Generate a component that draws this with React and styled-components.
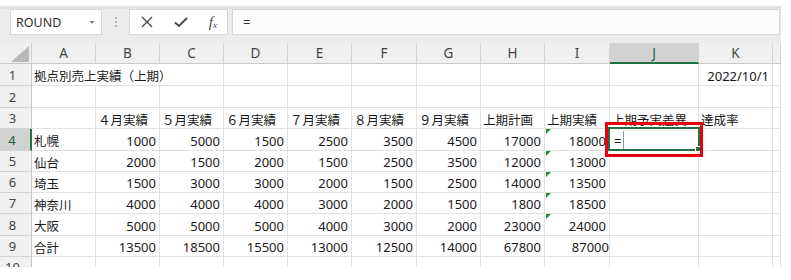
import styled, { createGlobalStyle } from "styled-components";

const GlobalStyle = createGlobalStyle`
  body {
    margin: 0;
    background: #fff;
    font-family: "Noto Sans", "Noto Sans CJK JP", sans-serif;
  }
`;

const colWidths = [32, 64, 64, 64, 64, 64, 65, 64, 64, 65, 89, 74, 8];
const rowHeights = [21, 22, 22, 21, 22, 21, 21, 21, 22, 21, 21];
const letters = ["A", "B", "C", "D", "E", "F", "G", "H", "I", "J", "K", ""];

const months = ["４月実績", "５月実績", "６月実績", "７月実績", "８月実績", "９月実績"];

const data = [
  ["札幌", 1000, 5000, 1500, 2500, 3500, 4500, 17000, 18000],
  ["仙台", 2000, 1500, 2000, 1500, 2500, 3500, 12000, 13000],
  ["埼玉", 1500, 3000, 3000, 2000, 1500, 2500, 14000, 13500],
  ["神奈川", 4000, 4000, 4000, 3000, 2000, 1500, 1800, 18500],
  ["大阪", 5000, 5000, 5000, 4000, 3000, 2000, 23000, 24000],
  ["合計", 13500, 18500, 15500, 13000, 12500, 14000, 67800, 87000],
];

const App = () => {
  return (
    <>
      <GlobalStyle />
      <Window>
        <Toolbar>
          <NameBox>
            <span>ROUND</span>
            <svg width="8" height="5" viewBox="0 0 8 5">
              <path d="M1.5 1 L4 3.8 L6.5 1 Z" fill="#777" />
            </svg>
          </NameBox>
          <Grip>
            <i />
            <i />
            <i />
          </Grip>
          <FxButtons>
            <svg width="14" height="14" viewBox="0 0 14 14">
              <path d="M2 2 L12 12 M12 2 L2 12" stroke="#4a4a4a" strokeWidth="1.4" fill="none" />
            </svg>
            <svg width="16" height="14" viewBox="0 0 16 14">
              <path d="M2 7.5 L6 11 L14 3" stroke="#4a4a4a" strokeWidth="2" fill="none" />
            </svg>
            <FxLabel>
              f<sub>x</sub>
            </FxLabel>
          </FxButtons>
          <FormulaInput>=</FormulaInput>
        </Toolbar>

        <Sheet>
          <Corner>
            <svg width="18" height="16" viewBox="0 0 18 16">
              <path d="M18 0 L18 16 L0 16 Z" fill="#b8b8b8" />
            </svg>
          </Corner>
          {letters.map((l, i) => (
            <ColHead key={i} $selected={l === "J"}>
              {l}
            </ColHead>
          ))}

          <RowHead>1</RowHead>
          <Cell $span={3} $jp>
            拠点別売上実績（上期）
          </Cell>
          {Array.from({ length: 7 }).map((_, i) => (
            <Cell key={i} />
          ))}
          <Cell $right>2022/10/1</Cell>
          <Cell />

          <RowHead>2</RowHead>
          {Array.from({ length: 12 }).map((_, i) => (
            <Cell key={i} />
          ))}

          <RowHead>3</RowHead>
          <Cell />
          {months.map((m) => (
            <Cell key={m} $jp>
              {m}
            </Cell>
          ))}
          <Cell $jp>上期計画</Cell>
          <Cell $jp>上期実績</Cell>
          <Cell $jp>上期予実差異</Cell>
          <Cell $jp>達成率</Cell>
          <Cell />

          {data.map((row, r) => (
            <Row key={r} row={row} index={r} />
          ))}

          <RowHead>10</RowHead>
          {Array.from({ length: 12 }).map((_, i) => (
            <Cell key={i} />
          ))}
        </Sheet>
      </Window>
    </>
  );
};

const Row = ({ row, index }) => {
  const [name, ...nums] = row;
  const last = index === data.length - 1;
  return (
    <>
      <RowHead $selected={index === 0}>{index + 4}</RowHead>
      <Cell $jp>{name}</Cell>
      {nums.map((n, i) => (
        <Cell key={i} $right $flag={i === 7 && !last} $shift={i === 7 && last}>
          {n}
        </Cell>
      ))}
      {index === 0 ? (
        <ActiveCell>
          =<Caret />
          <FillHandle />
        </ActiveCell>
      ) : (
        <Cell />
      )}
      <Cell />
      <Cell />
    </>
  );
};

export default App;

const Window = styled.div`
  width: 781px;
  padding-top: 6px;
`;

const Toolbar = styled.div`
  height: 37px;
  box-sizing: border-box;
  background: #ececec;
  border-top: 3px solid #e3e3e3;
  display: flex;
  align-items: flex-start;
  padding: 0 1px 0 10px;
`;

const Box = styled.div`
  height: 26px;
  box-sizing: border-box;
  background: #fff;
  border: 1px solid #d6d6d6;
  display: flex;
  align-items: center;
`;

const NameBox = styled(Box)`
  width: 92px;
  padding: 0 5px 0 5px;
  justify-content: space-between;
  font-size: 12.5px;
  color: #333;
`;

const Grip = styled.div`
  width: 27px;
  height: 26px;
  display: flex;
  flex-direction: column;
  align-items: center;
  justify-content: center;
  gap: 2px;

  i {
    width: 2px;
    height: 2px;
    background: #b5b5b5;
  }
`;

const FxButtons = styled(Box)`
  width: 99px;
  padding: 0 10px 0 10px;
  justify-content: space-between;
`;

const FxLabel = styled.span`
  font-family: "Liberation Serif", serif;
  font-style: italic;
  font-size: 15px;
  color: #4a4a4a;
  line-height: 1;

  sub {
    font-size: 9px;
    vertical-align: -1px;
  }
`;

const FormulaInput = styled(Box)`
  flex: 1;
  margin-left: 4px;
  padding-left: 10px;
  background: #fcfcfc;
  font-size: 13px;
  color: #333;
`;

const Sheet = styled.div`
  display: grid;
  grid-template-columns: ${colWidths.map((w) => `${w}px`).join(" ")};
  grid-template-rows: ${rowHeights.map((h) => `${h}px`).join(" ")};
  height: 224px;
  overflow: hidden;
  font-size: 13px;
  color: #1a1a1a;
`;

const Corner = styled.div`
  background: #f0f0f0;
  border-right: 1px solid #d0d0d0;
  border-bottom: 1px solid #c8c8c8;
  box-sizing: border-box;
  display: flex;
  align-items: flex-end;
  justify-content: flex-end;
  padding: 0 2px 1px 0;
`;

const ColHead = styled.div`
  box-sizing: border-box;
  background: ${(p) => (p.$selected ? "#d2d2d2" : "#f0f0f0")};
  border-right: 1px solid #d5d5d5;
  border-bottom: ${(p) => (p.$selected ? "2px solid #217346" : "1px solid #c8c8c8")};
  display: flex;
  align-items: center;
  justify-content: center;
  color: ${(p) => (p.$selected ? "#1f5e3a" : "#444")};
  font-size: 13.5px;
`;

const RowHead = styled.div`
  box-sizing: border-box;
  background: ${(p) => (p.$selected ? "#d2d2d2" : "#f0f0f0")};
  border-bottom: 1px solid #d5d5d5;
  border-right: ${(p) => (p.$selected ? "2px solid #217346" : "1px solid #c8c8c8")};
  display: flex;
  align-items: center;
  justify-content: center;
  padding-right: 6px;
  color: ${(p) => (p.$selected ? "#1f5e3a" : "#444")};
  font-size: 13px;
`;

const Cell = styled.div`
  position: relative;
  box-sizing: border-box;
  grid-column: span ${(p) => p.$span || 1};
  border-right: 1px solid #e1e1e1;
  border-bottom: 1px solid #e1e1e1;
  display: flex;
  align-items: center;
  justify-content: ${(p) => (p.$right ? "flex-end" : "flex-start")};
  padding: 2px ${(p) => (p.$shift ? "0px" : "3px")} 0 2px;
  white-space: nowrap;
  font-size: ${(p) => (p.$jp ? "12.5px" : "13px")};

  &::before {
    content: "";
    display: ${(p) => (p.$flag ? "block" : "none")};
    position: absolute;
    left: 1px;
    top: 0;
    border-top: 5px solid #1e8f3a;
    border-right: 5px solid transparent;
  }
`;

const ActiveCell = styled(Cell)`
  z-index: 2;
  padding-left: 4px;

  &::before {
    display: block;
    left: -2px;
    top: -2px;
    right: -2px;
    bottom: -1px;
    border: 2px solid #217346;
  }

  &::after {
    content: "";
    position: absolute;
    left: -5px;
    right: -5px;
    top: -7px;
    bottom: -7px;
    border: 3px solid #e8000b;
  }
`;

const Caret = styled.span`
  align-self: stretch;
  width: 1px;
  margin: 0 0 0 2px;
  background: #9a9a9a;
`;

const FillHandle = styled.span`
  position: absolute;
  right: -3px;
  bottom: -2px;
  width: 4px;
  height: 4px;
  background: #217346;
  border: 1px solid #fff;
`;
